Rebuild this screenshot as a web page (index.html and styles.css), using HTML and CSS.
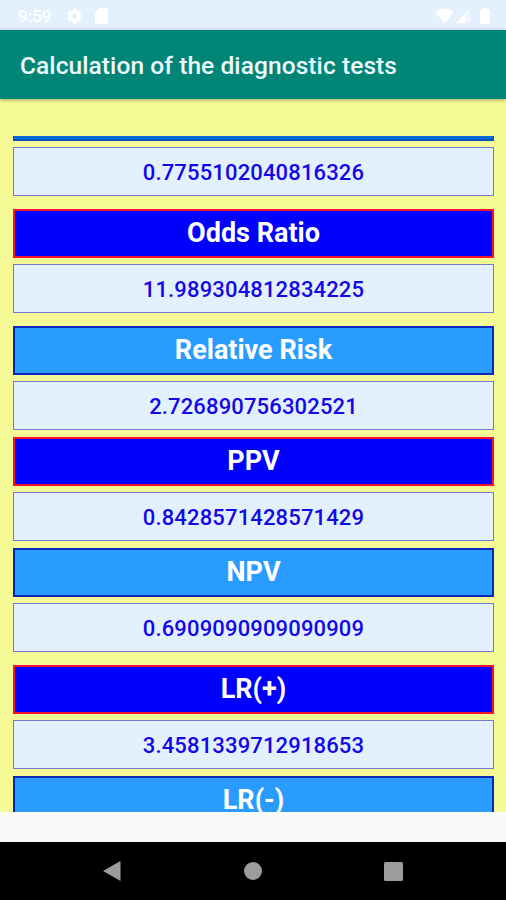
FILE: index.html
```
<!DOCTYPE html>
<html lang="en">
<head>
<meta charset="utf-8">
<meta name="viewport" content="width=device-width, initial-scale=1.0">
<title>Calculation of the diagnostic tests</title>
<link rel="stylesheet" href="styles.css">
</head>
<body>

<!-- STATUS BAR -->
<div class="status-bar">
  <span class="clock">9:59</span>
  <svg class="icon-gear" viewBox="2 2 20 20" width="15" height="16">
    <path fill-rule="evenodd" d="M19.4 13a7.5 7.5 0 0 0 0-2l2.1-1.6a.5.5 0 0 0 .1-.7l-2-3.4a.5.5 0 0 0-.6-.2l-2.5 1a7.3 7.3 0 0 0-1.7-1l-.4-2.6a.5.5 0 0 0-.5-.5h-4a.5.5 0 0 0-.5.5l-.4 2.6a7.3 7.3 0 0 0-1.7 1l-2.5-1a.5.5 0 0 0-.6.2l-2 3.4a.5.5 0 0 0 .1.7L4.6 11a7.5 7.5 0 0 0 0 2l-2.1 1.6a.5.5 0 0 0-.1.7l2 3.4c.1.2.4.3.6.2l2.5-1a7.3 7.3 0 0 0 1.7 1l.4 2.6c0 .3.2.5.5.5h4c.3 0 .5-.2.5-.5l.4-2.6a7.3 7.3 0 0 0 1.7-1l2.500 1c.2.1.5 0 .6-.2l2-3.4a.5.5 0 0 0-.1-.7zM12 15.500a3.5 3.5 0 1 1 0-7 3.5 3.5 0 0 1 0 7z"/>
  </svg>
  <svg class="icon-card" viewBox="0 0 13 16" width="13" height="16">
    <path d="M5 0h6.5A1.5 1.5 0 0 1 13 1.5v13a1.5 1.5 0 0 1-1.5 1.5h-10A1.5 1.5 0 0 1 0 14.5V5z"/>
  </svg>
  <svg class="icon-wifi" viewBox="0 0 20 16" width="19" height="16">
    <path d="M0 3.5Q10-3.5 20 3.5L10 16z"/>
  </svg>
  <svg class="icon-signal" viewBox="0 0 14 15" width="14" height="15">
    <path opacity=".4" d="M0 15L14 0v15z"/>
    <path d="M0 15L9 5.4V15z"/>
  </svg>
  <svg class="icon-battery" viewBox="0 0 10 16" width="10" height="16">
    <path d="M3 0h4v1.5h2a1 1 0 0 1 1 1V15a1 1 0 0 1-1 1H1a1 1 0 0 1-1-1V2.5a1 1 0 0 1 1-1h2z"/>
  </svg>
</div>

<!-- APP BAR -->
<div class="app-bar">
  <h1>Calculation of the diagnostic tests</h1>
</div>

<!-- RESULTS -->
<div class="content">
  <div class="list">
    <div class="cut"></div>
    <p class="value">0.7755102040816326</p>
    <h2 class="name dark space">Odds Ratio</h2>
    <p class="value">11.989304812834225</p>
    <h2 class="name space">Relative Risk</h2>
    <p class="value">2.726890756302521</p>
    <h2 class="name dark">PPV</h2>
    <p class="value">0.8428571428571429</p>
    <h2 class="name">NPV</h2>
    <p class="value">0.6909090909090909</p>
    <h2 class="name dark space">LR(+)</h2>
    <p class="value">3.4581339712918653</p>
    <h2 class="name">LR(-)</h2>
  </div>
</div>
<div class="blank"></div>

<!-- NAVIGATION -->
<div class="nav-bar">
  <svg viewBox="0 0 19 22" width="19" height="22"><path d="M1 11L18.500 1v20z"/></svg>
  <svg viewBox="0 0 18 18" width="18" height="18"><circle cx="9" cy="9" r="9"/></svg>
  <svg viewBox="0 0 19 19" width="19" height="19"><rect width="19" height="19" rx="1.5"/></svg>
</div>

</body>
</html>
```
FILE: styles.css
```
* {
  box-sizing: border-box;
}

body {
  margin: 0;
  width: 506px;
  height: 900px;
  overflow: hidden;
  display: flex;
  flex-direction: column;
  background: #fafafa;
  font-family: Roboto, "Liberation Sans", sans-serif;
}

/* Status bar */
.status-bar {
  height: 30px;
  flex: none;
  display: flex;
  align-items: center;
  padding: 1px 16px 0 18px;
  background: #e3f0fd;
  color: #fff;
  fill: #fff;
}

.clock {
  width: 49px;
  font-size: 17px;
  font-weight: 500;
}

.icon-card {
  margin-left: 13px;
}

.icon-wifi {
  margin-left: auto;
}

.icon-signal {
  margin-left: 2px;
}

.icon-battery {
  margin-left: 10px;
}

/* Title */
.app-bar {
  position: relative;
  height: 69px;
  flex: none;
  display: flex;
  align-items: center;
  padding: 2px 20px 0;
  background: #018577;
  box-shadow: 0 1px 4px rgba(0, 0, 0, 0.35);
}

h1 {
  margin: 0;
  color: #eefaff;
  font-size: 24.5px;
  font-weight: 500;
  letter-spacing: 0.08px;
  white-space: nowrap;
}

/* Results list */
.content {
  height: 713px;
  flex: none;
  padding: 37px 12px 0 13px;
  background: #f5fa96;
}

.list {
  height: 676px;
  overflow: hidden;
}

.cut {
  height: 5px;
  background: #0868d8;
  border: 1px solid #0755c0;
  border-width: 0 1px 2px;
}

.value,
.name {
  height: 49px;
  margin: 0;
  text-align: center;
}

.value {
  margin-top: 6px;
  border: 1px solid #7777d2;
  background: #e3f1fe;
  color: #1408e8;
  font-size: 22px;
  font-weight: 500;
  line-height: 49px;
  letter-spacing: 0.15px;
}

.name {
  margin-top: 7px;
  border: 2px solid #0828bd;
  background: #2a9cff;
  color: #fff;
  font-size: 27px;
  font-weight: 700;
  line-height: 44px;
}

.dark {
  border-color: #f81030;
  background: #0000ff;
}

.space {
  margin-top: 13px;
}

.blank {
  height: 30px;
  flex: none;
}

/* Android buttons */
.nav-bar {
  height: 58px;
  flex: none;
  display: flex;
  align-items: center;
  justify-content: space-between;
  padding: 0 103px 0 102px;
  background: #000;
  fill: #9c9c9c;
}
```
